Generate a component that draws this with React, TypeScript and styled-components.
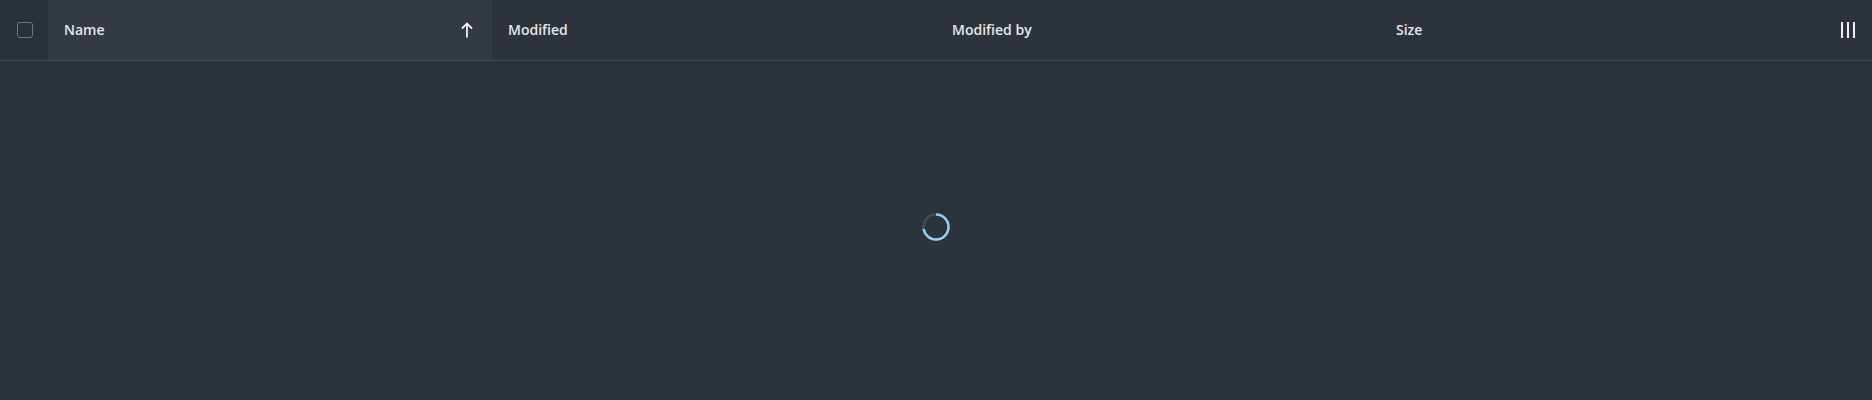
import React from "react";
import styled, { createGlobalStyle } from "styled-components";

const Global = createGlobalStyle`
  html, body { margin: 0; padding: 0; background: #2d333b; }
  body { font-family: "Open Sans", "Noto Sans", sans-serif; }
  * { box-sizing: border-box; }
`;

const Page = styled.div`
  width: 1872px;
  height: 400px;
  background: #2d333b;
  display: flex;
  flex-direction: column;
`;

const Header = styled.div`
  display: grid;
  grid-template-columns: 48px 444px 444px 444px 444px 1fr;
  height: 61px;
  border-bottom: 1px solid #414850;
`;

const CheckCell = styled.div`
  background: #2a3038;
  display: flex;
  align-items: center;
  justify-content: center;
  padding-left: 2px;
`;

const Checkbox = styled.div`
  width: 16px;
  height: 16px;
  border: 1.5px solid #6e747b;
  border-radius: 3px;
`;

const HeadCell = styled.div<{ $active?: boolean }>`
  background: ${(p) => (p.$active ? "#343a42" : "transparent")};
  display: flex;
  align-items: center;
  justify-content: space-between;
  padding: 0 19px 0 16px;
  color: #e4e6e8;
  font-size: 14px;
  font-weight: 600;
`;

const Label = styled.span`
  position: relative;
  top: -1px;
`;

const ColumnsCell = styled.div`
  display: flex;
  align-items: center;
  justify-content: flex-end;
  padding-right: 17px;
`;

const Body = styled.div`
  flex: 1;
  display: flex;
  align-items: center;
  justify-content: center;
  padding-bottom: 8px;
`;

const Spinner = styled.svg`
  width: 28px;
  height: 28px;
`;

const ArrowUp = () => (
  <svg width="12" height="16" viewBox="0 0 12 16" fill="none">
    <path d="M6 15.5V1.5M1 6.5L6 1.5L11 6.5" stroke="#eef0f2" strokeWidth="1.8" />
  </svg>
);

const ColumnsIcon = () => (
  <svg width="14" height="16" viewBox="0 0 14 16">
    <rect x="0" y="0" width="2" height="16" fill="#eceef0" />
    <rect x="6" y="0" width="2" height="16" fill="#eceef0" />
    <rect x="12" y="0" width="2" height="16" fill="#eceef0" />
  </svg>
);

export default function App() {
  return (
    <Page>
      <Global />
      <Header>
        <CheckCell>
          <Checkbox />
        </CheckCell>
        <HeadCell $active>
          <Label>Name</Label>
          <ArrowUp />
        </HeadCell>
        <HeadCell>
          <Label>Modified</Label>
        </HeadCell>
        <HeadCell>
          <Label>Modified by</Label>
        </HeadCell>
        <HeadCell>
          <Label>Size</Label>
        </HeadCell>
        <ColumnsCell>
          <ColumnsIcon />
        </ColumnsCell>
      </Header>
      <Body>
        <Spinner viewBox="0 0 28 28">
          <circle cx="14" cy="14" r="12.5" fill="none" stroke="#454c55" strokeWidth="2.5" />
          <circle
            cx="14"
            cy="14"
            r="12.5"
            fill="none"
            stroke="#8fd0f4"
            strokeWidth="2.5"
            strokeDasharray={`${2 * Math.PI * 12.5 * 0.72} ${2 * Math.PI * 12.5}`}
            transform="rotate(-90 14 14)"
          />
        </Spinner>
      </Body>
    </Page>
  );
}
